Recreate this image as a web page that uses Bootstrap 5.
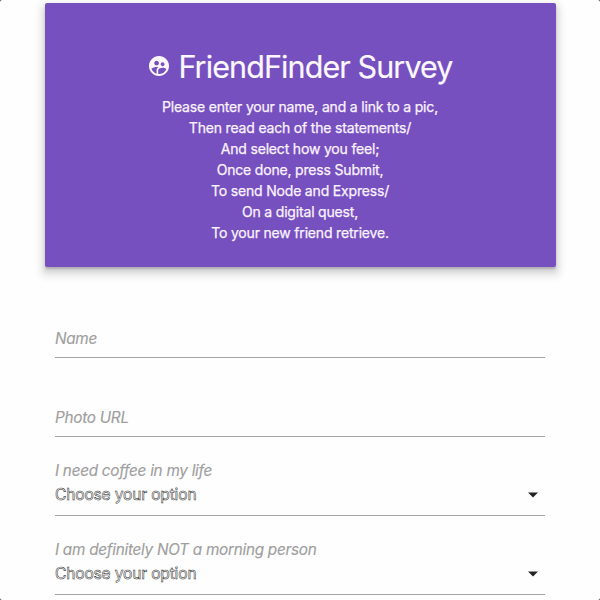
<!DOCTYPE html>
<html lang="en">
<head>
<meta charset="utf-8">
<meta name="viewport" content="width=device-width, initial-scale=1">
<title>FriendFinder Survey</title>
<link href="https://cdn.jsdelivr.net/npm/bootstrap@5.3.0/dist/css/bootstrap.min.css" rel="stylesheet">
<style>
html{background:#333}
body{font-family:Inter,"Liberation Sans",sans-serif;background:#fefefe;height:600px;overflow:hidden;border-radius:2px}
.survey{width:511px;padding-top:3px}
.hero{height:264px;background:#7650bf;border-radius:2px;padding-top:45px;box-shadow:0 2px 2px 0 rgba(0,0,0,.14),0 4px 5px 0 rgba(0,0,0,.12),0 5px 7px 5px rgba(0,0,0,.09)}
.hero h1{font-size:30.5px;line-height:38px;font-weight:400;letter-spacing:-.9px;margin:0 0 10px;color:#fdf8ff;-webkit-text-stroke:.15px #fdf8ff}
.hero p{font-size:14px;line-height:21px;letter-spacing:-.18px;color:#fbf3ff;-webkit-text-stroke:.25px #fbf3ff}
.hero svg{width:24px;height:24px;margin-right:7px;margin-top:-2px}
.field{height:79px;border-bottom:1px solid #a5a5a5}
.field input,.field label{font-size:15.3px;font-style:italic;line-height:20px;color:#9e9e9e;letter-spacing:-.27px;-webkit-text-stroke:.15px #9e9e9e}
.field input::placeholder{color:#9e9e9e;opacity:1}
.field input{margin-top:1px}
.choice{font-size:15.5px;line-height:20px;letter-spacing:-.13px;color:#fff;-webkit-text-stroke:.5px #222}
.caret{margin-right:7px}
</style>
<script src="https://cdn.jsdelivr.net/npm/bootstrap@5.3.0/dist/js/bootstrap.bundle.min.js" defer></script>
</head>
<body>
<main class="survey mx-auto">
  <header class="hero text-center">
    <h1 class="d-flex justify-content-center align-items-center"><svg viewBox="0 0 24 24" fill="#fdf8ff" aria-hidden="true"><path d="M11.99 2C6.47 2 2 6.48 2 12s4.47 10 9.99 10S22 17.52 22 12 17.52 2 11.99 2zm3.61 6.34c1.07 0 1.93.86 1.93 1.93s-.86 1.93-1.93 1.93-1.93-.86-1.93-1.93c-.01-1.07.86-1.93 1.93-1.93zm-6-1.58c1.3 0 2.36 1.06 2.36 2.36s-1.06 2.36-2.36 2.36-2.36-1.06-2.36-2.36c0-1.31 1.05-2.36 2.36-2.36zm0 9.13v3.75c-2.4-.75-4.3-2.6-5.14-4.96 1.05-1.12 3.67-1.69 5.14-1.69.53 0 1.2.08 1.9.22-1.64.87-1.9 2.02-1.9 2.68zM12 20c-.27 0-.53-.01-.79-.04v-4.07c0-1.42 2.94-2.13 4.4-2.13 1.07 0 2.92.39 3.84 1.15C18.28 17.88 15.39 20 12 20z"/></svg><span>FriendFinder Survey</span></h1>
    <p class="mb-0">Please enter your name, and a link to a pic,<br>Then read each of the statements/<br>And select how you feel;<br>Once done, press Submit,<br>To send Node and Express/<br>On a digital quest,<br>To your new friend retrieve.</p>
  </header>
  <form class="mx-auto pt-2" style="width:490px">
    <div class="field pt-5 d-flex align-items-start mt-1"><input class="form-control-plaintext p-0" placeholder="Name" aria-label="Name"></div>
    <div class="field pt-5 d-flex align-items-start"><input class="form-control-plaintext p-0" placeholder="Photo URL" aria-label="Photo URL"></div>
    <div class="field pt-4 d-flex flex-column">
      <label>I need coffee in my life</label>
      <div class="d-flex justify-content-between align-items-center mt-1"><span class="choice">Choose your option</span><svg class="caret" width="10" height="6" viewBox="0 0 10 6" fill="#222"><path d="M0 .5h10L5 5.5z"/></svg></div>
    </div>
    <div class="field pt-4 d-flex flex-column">
      <label>I am definitely NOT a morning person</label>
      <div class="d-flex justify-content-between align-items-center mt-1"><span class="choice">Choose your option</span><svg class="caret" width="10" height="6" viewBox="0 0 10 6" fill="#222"><path d="M0 .5h10L5 5.5z"/></svg></div>
    </div>
  </form>
</main>
</body>
</html>
